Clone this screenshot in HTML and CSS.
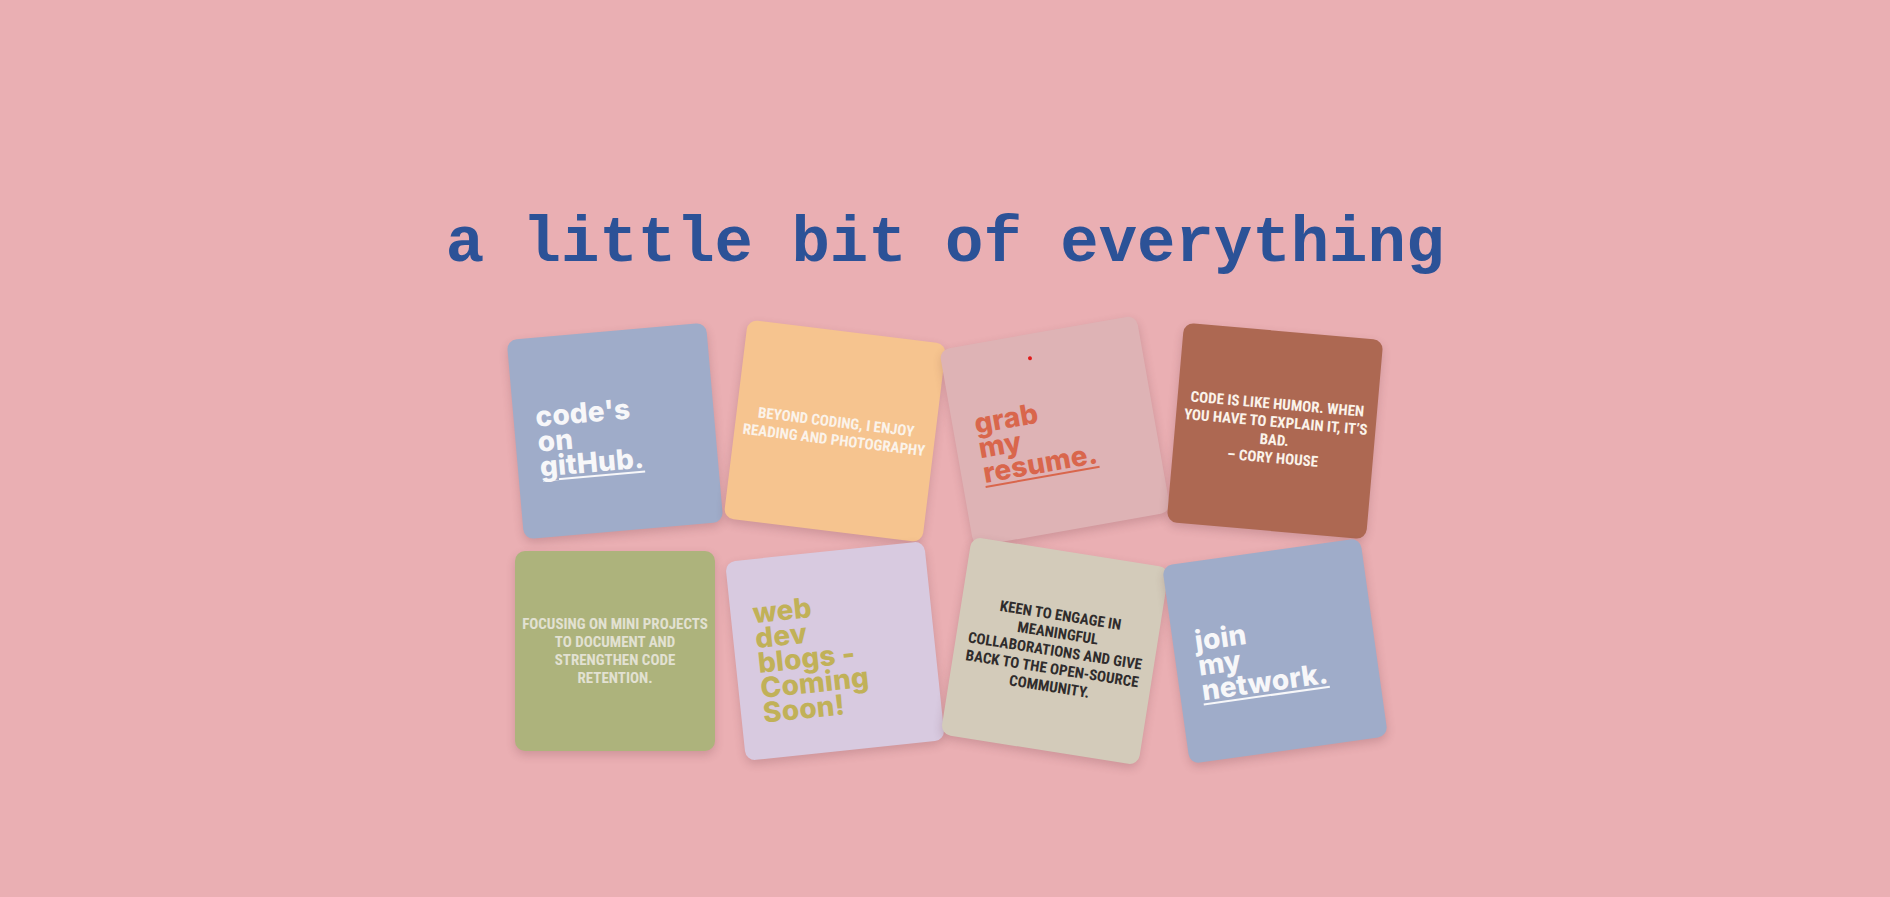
FILE: index.html
```html
<!DOCTYPE html>
<html lang="en">
<head>
<meta charset="utf-8">
<title>a little bit of everything</title>
<link rel="stylesheet" href="styles.css">
</head>
<body>
<main class="page">
  <h1 class="title">a little bit of everything</h1>
  <section class="board">
    <a class="card card-blue tilt-a big-card" href="#">
      <span class="big white">code's<br>on<br><u>gitHub.</u></span>
    </a>
    <div class="card card-orange tilt-b small-card">
      <p class="caps light">BEYOND CODING, I ENJOY READING AND PHOTOGRAPHY</p>
    </div>
    <a class="card card-rose tilt-c big-card" href="#">
      <span class="dot"></span>
      <span class="big coral">grab<br>my<br><u>resume.</u></span>
    </a>
    <div class="card card-brown tilt-d small-card">
      <p class="caps light">CODE IS LIKE HUMOR. WHEN YOU HAVE TO EXPLAIN IT, IT’S BAD.<br>– CORY HOUSE</p>
    </div>
    <div class="card card-green small-card">
      <p class="caps pale">FOCUSING ON MINI PROJECTS TO DOCUMENT AND STRENGTHEN CODE RETENTION.</p>
    </div>
    <div class="card card-lilac tilt-f big-card">
      <span class="big mustard">web<br>dev<br>blogs -<br>Coming<br>Soon!</span>
    </div>
    <div class="card card-sand tilt-g small-card">
      <p class="caps dark">KEEN TO ENGAGE IN MEANINGFUL COLLABORATIONS AND GIVE BACK TO THE OPEN-SOURCE COMMUNITY.</p>
    </div>
    <a class="card card-blue tilt-h big-card" href="#">
      <span class="big white">join<br>my<br><u>network.</u></span>
    </a>
  </section>
</main>
</body>
</html>
```

FILE: styles.css
```css
* { box-sizing: border-box; }

html, body {
  margin: 0;
  padding: 0;
}

body {
  background: #eaafb3;
  min-height: 897px;
  font-family: "Noto Sans", sans-serif;
}

.page {
  display: flex;
  flex-direction: column;
  align-items: center;
  padding-top: 208px;
}

.title {
  margin: 0 0 51px;
  font-family: "Liberation Mono", "Courier New", monospace;
  font-weight: 700;
  font-size: 64px;
  line-height: 72px;
  color: #2c5297;
  letter-spacing: 0;
}

.board {
  display: grid;
  grid-template-columns: repeat(4, 200px);
  grid-auto-rows: 200px;
  gap: 20px;
}

.card {
  position: relative;
  width: 200px;
  height: 200px;
  border-radius: 10px;
  box-shadow: 0 4px 10px rgba(90, 40, 50, 0.2);
  display: flex;
  text-decoration: none;
}

.small-card {
  align-items: center;
  justify-content: center;
  padding: 0 5px;
  text-align: center;
}

.big-card {
  flex-direction: column;
  justify-content: center;
  padding: 8px 0 0 22px;
}

.card-blue { background: #9facc9; }
.card-orange { background: #f6c48f; }
.card-rose { background: #deb3b5; }
.card-brown { background: #ad6852; }
.card-green { background: #adb37c; }
.card-lilac { background: #d8cae0; }
.card-sand { background: #d3cbba; }

.tilt-a { transform: rotate(-5deg); }
.tilt-b { transform: rotate(7deg); }
.tilt-c { transform: rotate(-10deg); }
.tilt-d { transform: rotate(5deg); }
.tilt-f { transform: rotate(-6deg); }
.tilt-g { transform: rotate(9deg); }
.tilt-h { transform: rotate(-8deg); }

.big {
  display: block;
  font-family: Inter, "Open Sans", sans-serif;
  font-weight: 800;
  font-size: 28px;
  line-height: 25px;
  letter-spacing: 0.2px;
}

.big u {
  text-decoration-thickness: 2px;
  text-underline-offset: 3px;
}

.white { color: #f7f7f9; }
.coral { color: #d9664c; }
.mustard { color: #c1b158; }

.caps {
  margin: 0;
  font-family: "Roboto Condensed", "Liberation Sans Narrow", "DejaVu Sans Condensed", Roboto, sans-serif;
  font-stretch: condensed;
  font-weight: 700;
  font-size: 15px;
  line-height: 18px;
}

.light { color: #fbf3ea; }
.pale { color: #e2e1d2; }
.dark { color: #2f2c2c; }

.dot {
  position: absolute;
  left: 86px;
  top: 22px;
  width: 4px;
  height: 4px;
  border-radius: 50%;
  background: #e01b1b;
}
```
